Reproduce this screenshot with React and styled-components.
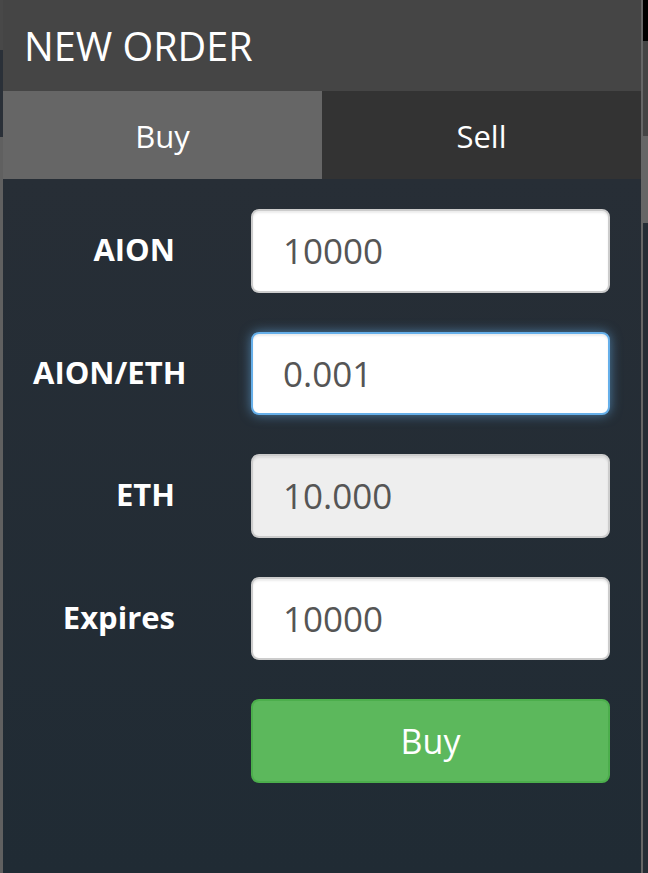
import React from "react";
import styled, { createGlobalStyle } from "styled-components";

const GlobalStyle = createGlobalStyle`
  html, body {
    margin: 0;
    padding: 0;
    background: #252d35;
  }
  body {
    font-family: "Open Sans", "Noto Sans", sans-serif;
  }
`;

const Page = styled.div`
  display: flex;
  width: 648px;
  height: 873px;
  overflow: hidden;
`;

const Edge = styled.div`
  width: ${({ w }) => w}px;
  flex: none;
  background: ${({ bg }) => bg};
`;

const Panel = styled.div`
  flex: 1;
  display: flex;
  flex-direction: column;
  border-right: 2px solid #666;
`;

const Header = styled.div`
  height: 91px;
  flex: none;
  display: flex;
  align-items: center;
  padding-left: 21px;
  background: #454545;
  color: #fff;
  font-size: 39.5px;
  font-weight: 400;
`;

const Tabs = styled.div`
  display: grid;
  grid-template-columns: 319px 1fr;
  height: 88px;
  flex: none;
`;

const Tab = styled.div`
  display: flex;
  align-items: center;
  justify-content: center;
  background: ${({ active }) => (active ? "#666666" : "#333333")};
  color: #fff;
  font-size: 31px;
  padding-top: 2px;
  box-sizing: border-box;
`;

const Body = styled.div`
  flex: 1;
  background: linear-gradient(#272e36, #202b34);
  padding: 30px 31px 0 30px;
  display: grid;
  grid-template-columns: 142px 1fr;
  column-gap: 76px;
  row-gap: 39px;
  grid-auto-rows: 83.5px;
  align-content: start;
`;

const Label = styled.div`
  text-align: right;
  color: #fff;
  font-weight: 700;
  font-size: 31px;
  align-self: center;
  white-space: nowrap;
  padding-bottom: 3px;
`;

const Input = styled.div`
  box-sizing: border-box;
  border-radius: 8px;
  border: 2px solid ${({ focus }) => (focus ? "#66afe9" : "#cccccc")};
  background: ${({ disabled }) => (disabled ? "#eeeeee" : "#ffffff")};
  box-shadow: ${({ focus }) =>
    focus
      ? "inset 0 2px 2px rgba(0,0,0,.075), 0 0 12px rgba(102,175,233,.6)"
      : "inset 0 2px 2px rgba(0,0,0,.075)"};
  display: flex;
  align-items: center;
  padding-left: 30px;
  color: #555;
  font-size: 35px;
`;

const Button = styled.div`
  grid-column: 2;
  box-sizing: border-box;
  border-radius: 8px;
  background: #5cb85c;
  border: 2px solid #4cae4c;
  color: #fff;
  font-size: 34px;
  display: flex;
  align-items: center;
  justify-content: center;
`;

const fields = [
  { label: "AION", value: "10000" },
  { label: "AION/ETH", value: "0.001", focus: true },
  { label: "ETH", value: "10.000", disabled: true },
  { label: "Expires", value: "10000" },
];

export default function App() {
  return (
    <>
      <GlobalStyle />
      <Page>
        <Edge w={3} bg="linear-gradient(#484848 0 50px, #2a3038 50px 137px, #606060 137px)" />
        <Panel>
          <Header>NEW ORDER</Header>
          <Tabs>
            <Tab active>Buy</Tab>
            <Tab>Sell</Tab>
          </Tabs>
          <Body>
            {fields.map((f) => (
              <React.Fragment key={f.label}>
                <Label>{f.label}</Label>
                <Input focus={f.focus} disabled={f.disabled}>
                  {f.value}
                </Input>
              </React.Fragment>
            ))}
            <Button>Buy</Button>
          </Body>
        </Panel>
        <Edge
          w={5}
          bg="linear-gradient(#000 0 41px, #444 41px 136px, #666 136px 223px, #252d35 223px)"
        />
      </Page>
    </>
  );
}
